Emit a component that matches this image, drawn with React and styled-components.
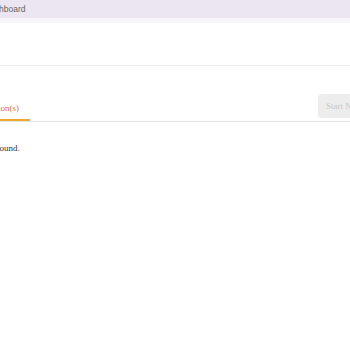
import React from "react";
import styled, { createGlobalStyle } from "styled-components";

const Global = createGlobalStyle`
  html, body { margin: 0; padding: 0; background: #ffffff; overflow: hidden; }
  body { width: 350px; height: 350px; }
`;

const Page = styled.div`
  width: 350px;
  height: 350px;
  overflow: hidden;
  background: #ffffff;
`;

const Shift = styled.div`
  margin-left: -60px;
  width: 500px;
`;

const TopBar = styled.div`
  height: 18px;
  background: #ebe6f1;
  display: flex;
  align-items: center;
  padding-left: 44px;
  border-bottom: 5px solid #f8f5fb;
`;

const Crumb = styled.span`
  font-family: "Liberation Sans", Arial, sans-serif;
  font-size: 8.5px;
  color: #666666;
`;

const HeaderArea = styled.div`
  height: 42px;
  border-bottom: 1px solid #ececec;
`;

const Content = styled.div`
  padding-top: 24px;
`;

const TabRow = styled.div`
  display: flex;
  justify-content: space-between;
  border-bottom: 1px solid #e4e4e4;
  height: 31px;
  padding-left: 25px;
`;

const Tabs = styled.div`
  display: flex;
  align-self: stretch;
`;

const Tab = styled.div`
  font-family: "Liberation Serif", "Times New Roman", serif;
  font-size: 9px;
  color: ${(p) => (p.$active ? "#e0703a" : "#666")};
  padding: 7px 11px 0 17px;
  display: flex;
  align-items: center;
  border-bottom: 2px solid ${(p) => (p.$active ? "#f3a62f" : "transparent")};
`;

const StartButton = styled.button`
  align-self: flex-start;
  margin: 4px 12px 0 0;
  height: 24px;
  width: 110px;
  padding: 0 8px;
  border: none;
  border-radius: 4px;
  background: #ededed;
  color: #c6c6c6;
  font-family: "Liberation Serif", "Times New Roman", serif;
  font-size: 9px;
  white-space: nowrap;
  text-align: left;
`;

const Empty = styled.p`
  margin: 21px 0 0 0;
  padding-left: 15px;
  font-family: "Liberation Serif", "Times New Roman", serif;
  font-size: 9px;
  color: #333;
`;

export default function App() {
  return (
    <Page>
      <Global />
      <Shift>
        <TopBar>
          <Crumb>Dashboard</Crumb>
        </TopBar>
        <HeaderArea />
        <Content>
          <TabRow>
            <Tabs>
              <Tab $active>Session(s)</Tab>
            </Tabs>
            <StartButton disabled>Start New Session</StartButton>
          </TabRow>
          <Empty>No session found.</Empty>
        </Content>
      </Shift>
    </Page>
  );
}
